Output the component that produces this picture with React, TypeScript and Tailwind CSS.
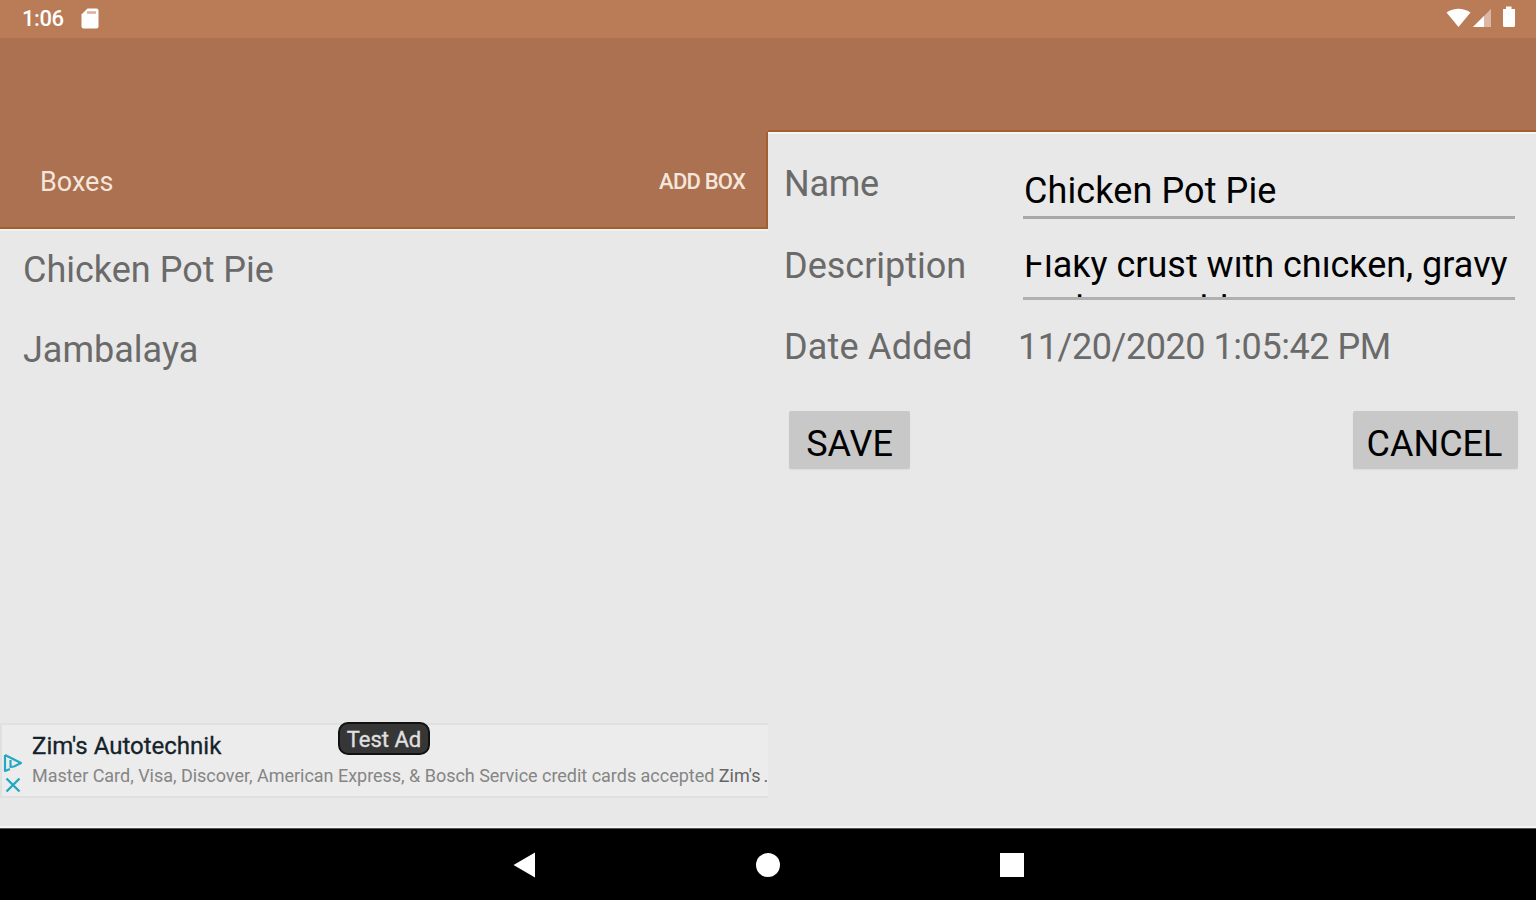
const boxes = ["Chicken Pot Pie", "Jambalaya"];

function StatusBar() {
  return (
    <div className="flex h-[38px] shrink-0 items-start bg-[#ba7b57] text-white">
      <span className="ml-[22px] mt-[6px] text-[22px] leading-[26px] font-medium tracking-[-0.4px]">
        1:06
      </span>
      <svg className="ml-[17px] mt-[8px]" width="18" height="21" viewBox="0 0 18 21">
        <path d="M6.5 0.5H15.5Q17.5 0.5 17.5 2.5V18.5Q17.5 20.5 15.5 20.5H2.5Q0.5 20.5 0.5 18.5V6.5Z" fill="#fff" />
        <path d="M6 4.5H15" stroke="#dcae98" strokeWidth="2.5" />
      </svg>
      <svg className="ml-auto mr-[18px] mt-[4px]" width="72" height="25" viewBox="0 0 72 25">
        <path d="M0.5 8.500Q12.5 1 24.5 8.500L12.5 23Z" fill="#fff" />
        <path d="M45 5V23H27Z" fill="#dcb8a4" />
        <path d="M38 12V23H27Z" fill="#fff" />
        <path d="M57 5H60V2.500H65.500V5H69V21.500Q69 23 67.500 23H58.500Q57 23 57 21.500Z" fill="#fff" />
      </svg>
    </div>
  );
}

function AdBanner() {
  return (
    <div className="relative mt-auto mb-[28px] flex h-[75px] items-stretch border-y-2 border-l-2 border-[#e0e0e0] bg-[#ececec]">
      <div className="flex w-[30px] shrink-0 flex-col items-start pt-[28px]">
        <svg className="ml-px" width="20" height="20" viewBox="0 0 20 20" fill="none" stroke="#23a9c4" strokeWidth="2.2">
          <path d="M2 2V18L7 16M2 2L18 10L11 13.500M7.500 7V14L11 13.500" strokeLinejoin="round" />
        </svg>
        <svg className="ml-[3px] mt-[4px]" width="16" height="16" viewBox="0 0 16 16" stroke="#23a9c4" strokeWidth="2.400">
          <path d="M1.500 1.500L14.500 14.500M14.500 1.500L1.500 14.500" />
        </svg>
      </div>
      <div className="min-w-0 flex-1 whitespace-nowrap">
        <p className="mt-[6px] text-[24px] leading-[30px] text-[#14232b] [-webkit-text-stroke:0.3px]">
          Zim's Autotechnik
        </p>
        <p className="mt-[3px] text-[18px] leading-[24px] tracking-[-0.02px] text-[#858585]">
          Master Card, Visa, Discover, American Express, &amp; Bosch Service credit cards accepted{" "}
          <span className="text-[#666]">
            Zim's<span className="ml-[3px]">.</span>
          </span>
        </p>
      </div>
      <span className="absolute -top-[3px] left-[336px] flex h-[33px] w-[92px] items-center justify-center rounded-[10px] border-2 border-[#111] bg-[#363636] pt-[2px] text-[22px] text-[#e0e0e0] [-webkit-text-stroke:0.3px]">
        Test Ad
      </span>
    </div>
  );
}

function BoxList() {
  return (
    <section className="flex w-1/2 flex-col">
      <div className="flex h-[97px] shrink-0 items-center justify-between border-r-2 border-b-2 border-[#a3602f] bg-[#ab7150] pr-[21px] pl-[40px] text-[#f5e6dc]">
        <h1 className="pt-[5px] text-[27px] leading-8">Boxes</h1>
        <button className="pt-[4px] text-[22px] leading-7 font-medium tracking-[-0.8px]">ADD BOX</button>
      </div>
      <ul className="border-t-2 border-[#f2f2f2] text-[36px] leading-[78px] text-[#6a6a6a]">
        {boxes.map((box) => (
          <li key={box} className="h-[80px] pl-[23px]">
            {box}
          </li>
        ))}
      </ul>
      <AdBanner />
    </section>
  );
}

function BoxForm() {
  return (
    <section className="flex w-1/2 flex-col border-t-2 border-[#f5f5f5] pr-[18px] pl-[16px] text-[36px] text-[#6a6a6a]">
      <div className="flex h-[85px]">
        <label className="mt-[29px] w-[239px] leading-[42px] tracking-[-0.3px]">Name</label>
        <div className="mt-[36px] mr-[3px] h-[49px] flex-1 border-b-3 border-[#a8a8a8] pl-px leading-[42px] tracking-[0.1px] text-black">
          Chicken Pot Pie
        </div>
      </div>
      <div className="flex h-[81px]">
        <label className="mt-[26px] w-[239px] leading-[42px]">Description</label>
        <div className="mt-[36px] mr-[3px] h-[45px] flex-1 overflow-hidden border-b-3 border-[#b0b0b0] pl-px text-black">
          <p className="-mt-[12px] leading-[45px] whitespace-nowrap">
            Flaky crust with chicken, gravy
            <br />
            and vegetables
          </p>
        </div>
      </div>
      <div className="flex h-[81px]">
        <span className="mt-[26px] w-[234px] leading-[42px] tracking-[0.2px]">Date Added</span>
        <span className="mt-[26px] leading-[42px] tracking-[-0.45px] whitespace-nowrap">11/20/2020 1:05:42 PM</span>
      </div>
      <div className="mt-[30px] flex justify-between pl-[5px] text-black">
        <button className="h-[58px] w-[121px] rounded-[2px] bg-[#c8c8c8] pt-[8px] leading-[42px] shadow-xs">SAVE</button>
        <button className="h-[58px] w-[165px] rounded-[2px] bg-[#c8c8c8] pt-[8px] pr-[2px] leading-[42px] shadow-xs">CANCEL</button>
      </div>
    </section>
  );
}

export default function App() {
  return (
    <div className="flex h-[900px] w-[1536px] flex-col overflow-hidden bg-[#e8e8e8] font-[Roboto,sans-serif]">
      <StatusBar />
      <header className="flex h-[94px] shrink-0 bg-[#ab7150]">
        <div className="ml-auto w-1/2 border-b-2 border-[#a3602f]" />
      </header>
      <main className="flex min-h-0 flex-1 border-b-2 border-[#f4f4f4]">
        <BoxList />
        <BoxForm />
      </main>
      <nav className="flex h-[72px] shrink-0 items-center justify-center gap-[220px] border-t border-[#555] bg-black">
        <svg width="24" height="26" viewBox="0 0 24 26">
          <path d="M23 0.500V25.500L1.500 13Z" fill="#fff" />
        </svg>
        <span className="h-[24px] w-[24px] rounded-full bg-white" />
        <span className="h-[24px] w-[24px] bg-white" />
      </nav>
    </div>
  );
}
